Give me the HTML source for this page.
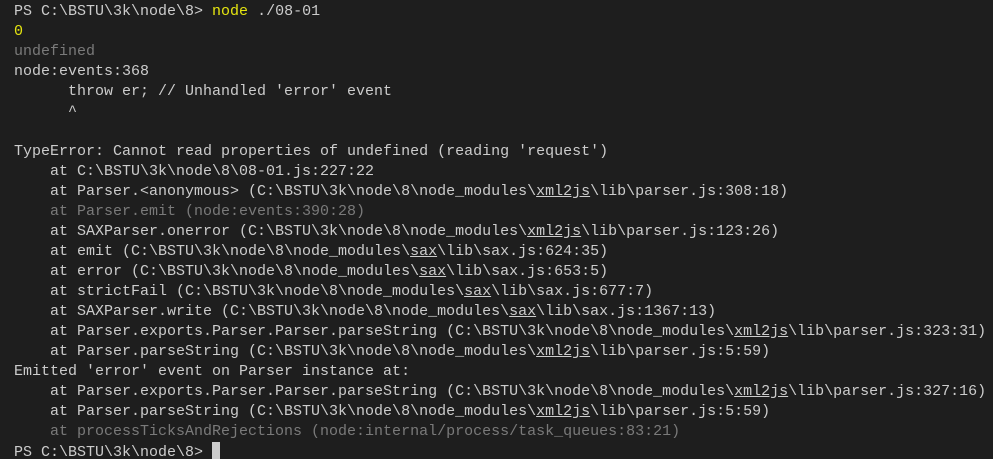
<!DOCTYPE html>
<html><head><style>
html,body{margin:0;padding:0;background:#1e1e1e;width:993px;height:459px;overflow:hidden}
pre{margin:0;padding:2px 0 0 14px;font-family:"Liberation Mono",monospace;font-size:15px;line-height:20px;color:#cccccc;white-space:pre}
.y{color:#e5e510}.g{color:#7a7a7a}u{text-decoration:underline}
.c{display:inline-block;width:8px;height:18px;background:#cccccc;vertical-align:-4px}
</style></head><body><pre>PS C:\BSTU\3k\node\8&gt; <span class="y">node</span> ./08-01
<span class="y">0</span>
<span class="g">undefined</span>
node:events:368
      throw er; // Unhandled 'error' event
      ^

TypeError: Cannot read properties of undefined (reading 'request')
    at C:\BSTU\3k\node\8\08-01.js:227:22
    at Parser.&lt;anonymous&gt; (C:\BSTU\3k\node\8\node_modules\<u>xml2js</u>\lib\parser.js:308:18)
<span class="g">    at Parser.emit (node:events:390:28)</span>
    at SAXParser.onerror (C:\BSTU\3k\node\8\node_modules\<u>xml2js</u>\lib\parser.js:123:26)
    at emit (C:\BSTU\3k\node\8\node_modules\<u>sax</u>\lib\sax.js:624:35)
    at error (C:\BSTU\3k\node\8\node_modules\<u>sax</u>\lib\sax.js:653:5)
    at strictFail (C:\BSTU\3k\node\8\node_modules\<u>sax</u>\lib\sax.js:677:7)
    at SAXParser.write (C:\BSTU\3k\node\8\node_modules\<u>sax</u>\lib\sax.js:1367:13)
    at Parser.exports.Parser.Parser.parseString (C:\BSTU\3k\node\8\node_modules\<u>xml2js</u>\lib\parser.js:323:31)
    at Parser.parseString (C:\BSTU\3k\node\8\node_modules\<u>xml2js</u>\lib\parser.js:5:59)
Emitted 'error' event on Parser instance at:
    at Parser.exports.Parser.Parser.parseString (C:\BSTU\3k\node\8\node_modules\<u>xml2js</u>\lib\parser.js:327:16)
    at Parser.parseString (C:\BSTU\3k\node\8\node_modules\<u>xml2js</u>\lib\parser.js:5:59)
<span class="g">    at processTicksAndRejections (node:internal/process/task_queues:83:21)</span>
PS C:\BSTU\3k\node\8&gt; <span class="c"></span></pre></body></html>
